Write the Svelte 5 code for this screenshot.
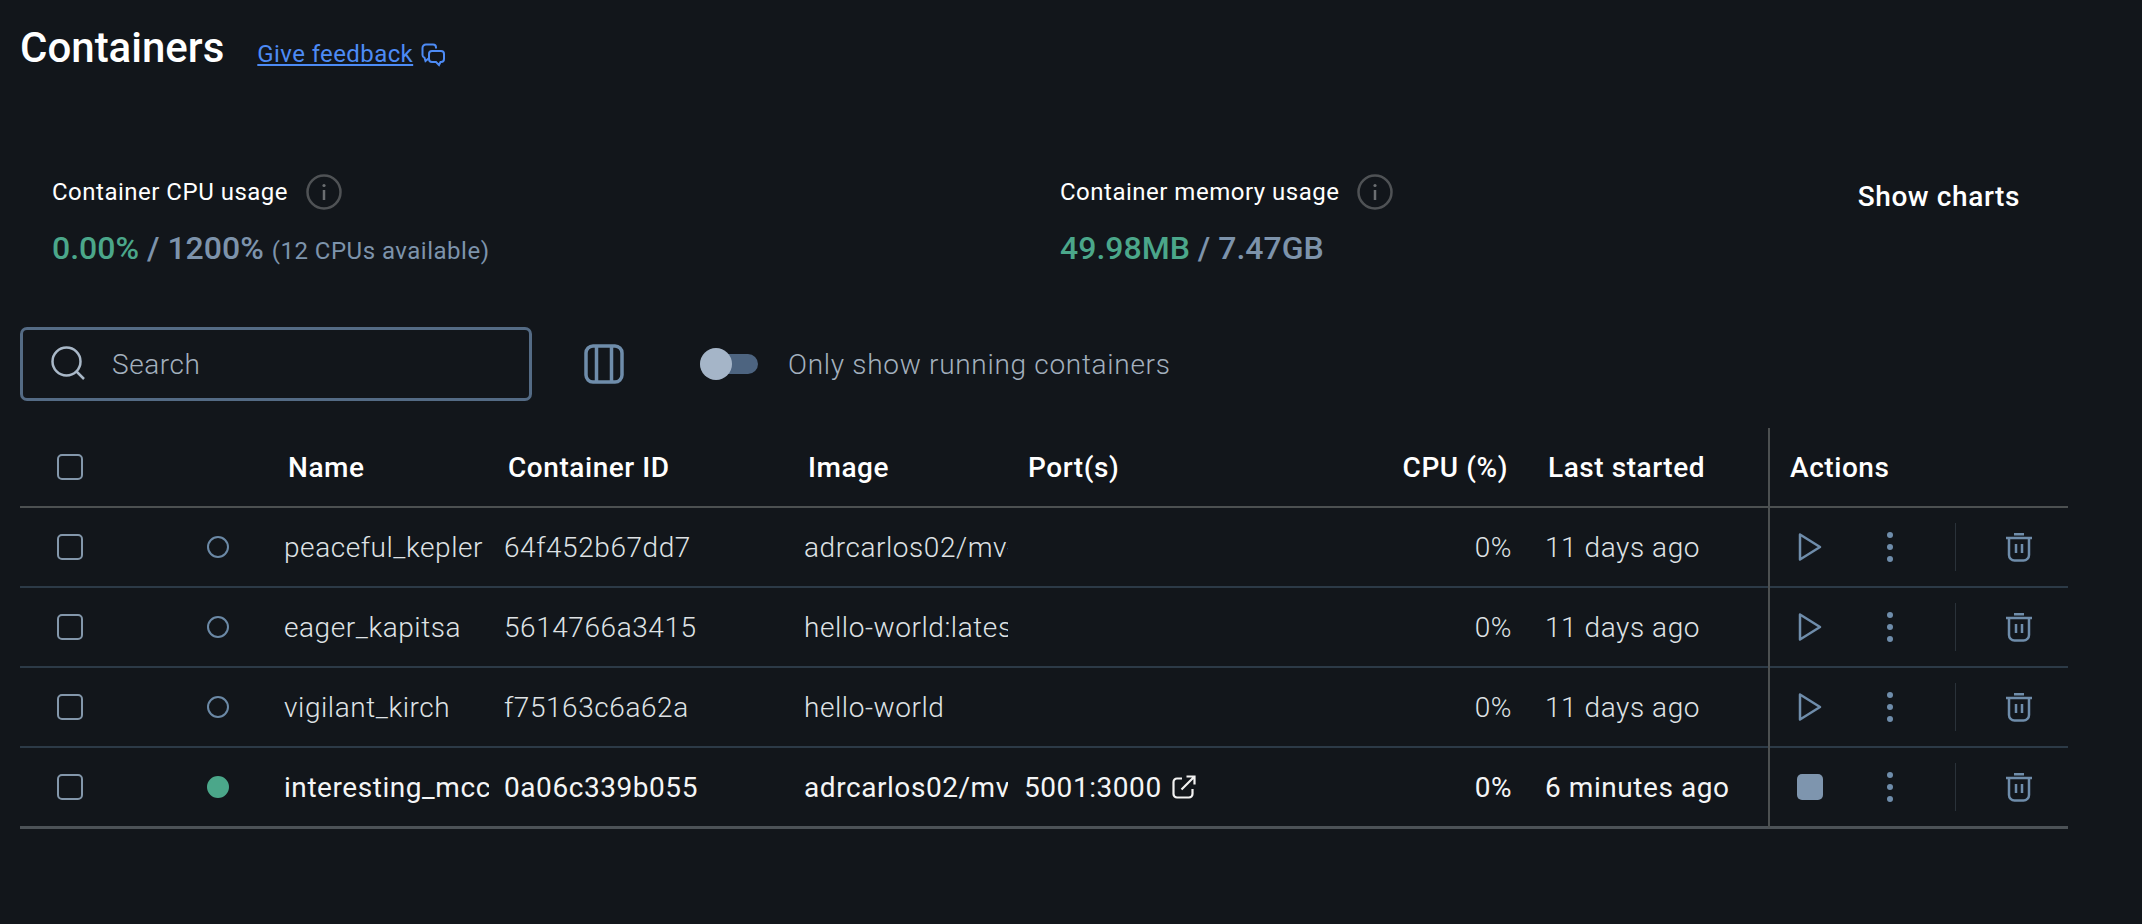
<script lang="ts">
  const rows = [
    { name: 'peaceful_kepler', id: '64f452b67dd7', image: 'adrcarlos02/mv-nodeapp:latest', port: '', cpu: '0%', started: '11 days ago', running: false },
    { name: 'eager_kapitsa', id: '5614766a3415', image: 'hello-world:latest', port: '', cpu: '0%', started: '11 days ago', running: false },
    { name: 'vigilant_kirch', id: 'f75163c6a62a', image: 'hello-world', port: '', cpu: '0%', started: '11 days ago', running: false },
    { name: 'interesting_mccarthy', id: '0a06c339b055', image: 'adrcarlos02/mv-nodeapp:latest', port: '5001:3000', cpu: '0%', started: '6 minutes ago', running: true }
  ];
</script>

{#snippet checkbox()}
  <span class="checkbox"></span>
{/snippet}

{#snippet info()}
  <svg class="info" width="36" height="36" viewBox="0 0 36 36" fill="none">
    <circle cx="18" cy="18" r="16.5" stroke="#4f5255" stroke-width="2.5" />
    <circle cx="18" cy="11.5" r="1.6" fill="#6b6e71" />
    <path d="M18 16v10" stroke="#6b6e71" stroke-width="2.5" />
  </svg>
{/snippet}

<main class="page">
  <header class="title">
    <h1>Containers</h1>
    <a href="#feedback">Give feedback</a>
    <svg width="24" height="24" viewBox="0 0 24 24" fill="none" stroke="#4d8bf5" stroke-width="2">
      <path d="M15 5.5V4.5a3 3 0 0 0-3-3H5a3.500 3.500 0 0 0-3.500 3.500v7a3 3 0 0 0 2 2.800l1 3.200 3-2.500" />
      <path d="M11 8h9a3 3 0 0 1 3 3v5a3 3 0 0 1-3 3h-.5l-1.500 3-3-3h-4a3 3 0 0 1-3-3v-5a3 3 0 0 1 3-3z" />
    </svg>
  </header>

  <section class="stats">
    <div class="stat cpu">
      <div class="stat-label">Container CPU usage {@render info()}</div>
      <div class="stat-value"><b>0.00%</b> / 1200% <small>(12 CPUs available)</small></div>
    </div>
    <div class="stat memory">
      <div class="stat-label">Container memory usage {@render info()}</div>
      <div class="stat-value"><b>49.98MB</b> / 7.47GB</div>
    </div>
    <button class="charts">Show charts</button>
  </section>

  <section class="toolbar">
    <label class="search">
      <svg width="36" height="36" viewBox="0 0 36 36" fill="none" stroke="#a9b8c8" stroke-width="2.500">
        <circle cx="15.5" cy="15.500" r="14" />
        <path d="M25.500 25.500L33 33" />
      </svg>
      <span>Search</span>
    </label>
    <svg class="columns" width="40" height="40" viewBox="0 0 40 40" fill="none" stroke="#6f8dab" stroke-width="3.500">
      <rect x="2" y="2" width="36" height="36" rx="7" />
      <path d="M12.500 2v36M27.500 2v36" />
    </svg>
    <div class="toggle"><span class="knob"></span></div>
    <span class="toggle-label">Only show running containers</span>
  </section>

  <section class="table">
    <div class="row head">
      <div class="cell check">{@render checkbox()}</div>
      <div class="cell"></div>
      <div class="cell name">Name</div>
      <div class="cell id">Container ID</div>
      <div class="cell image">Image</div>
      <div class="cell port">Port(s)</div>
      <div class="cell cpu">CPU (%)</div>
      <div class="cell started">Last started</div>
      <div class="cell actions">Actions</div>
    </div>
    {#each rows as row}
      <div class="row" class:running={row.running}>
        <div class="cell check">{@render checkbox()}</div>
        <div class="cell status"><span class="dot"></span></div>
        <div class="cell name">{row.name}</div>
        <div class="cell id">{row.id}</div>
        <div class="cell image">{row.image}</div>
        <div class="cell port">
          {#if row.port}
            {row.port}
            <svg width="24" height="24" viewBox="0 0 24 24" fill="none" stroke="#f2f2f2" stroke-width="2.200">
              <path d="M10 3.500H5a3.500 3.500 0 0 0-3.500 3.500v12A3.500 3.500 0 0 0 5 22.500h12a3.500 3.500 0 0 0 3.500-3.500v-5" />
              <path d="M9.500 14.500L22 2M14.500 1.500H22.500V9.500" />
            </svg>
          {/if}
        </div>
        <div class="cell cpu">{row.cpu}</div>
        <div class="cell started">{row.started}</div>
        <div class="cell actions">
          <span class="act-main">
            {#if row.running}
              <span class="stop"></span>
            {:else}
              <svg width="24" height="30" viewBox="0 0 24 30" fill="none" stroke="#6f8dab" stroke-width="2.500" stroke-linejoin="round">
                <path d="M2 2.500L22 15 2 27.500z" />
              </svg>
            {/if}
          </span>
          <span class="kebab"><i></i><i></i><i></i></span>
          <span class="sep"></span>
          <svg class="trash" width="28" height="30" viewBox="0 0 28 30" fill="none" stroke="#6f8dab" stroke-width="2.500">
            <path d="M1 6h26M9 2.200h10" />
            <path d="M4 6v17a5.500 5.500 0 0 0 5.500 5.500h9A5.500 5.500 0 0 0 24 23V6" />
            <path d="M11 12v9M17 12v9" />
          </svg>
        </div>
      </div>
    {/each}
  </section>
</main>

<style>
  :global(body) {
    margin: 0;
    background: #12161b;
  }
  .page {
    height: 924px;
    padding: 0 74px 0 20px;
    box-sizing: border-box;
    color: #fff;
    font-family: Roboto, 'Noto Sans', sans-serif;
    overflow: hidden;
  }
  .title {
    display: flex;
    align-items: baseline;
    height: 90px;
    padding-top: 21px;
    box-sizing: border-box;
  }
  h1 {
    margin: 0 33px 0 0;
    font-size: 42px;
    font-weight: 500;
    line-height: 54px;
  }
  .title a {
    color: #4d8bf5;
    font-size: 24px;
    letter-spacing: 0.4px;
    margin-right: 8px;
  }
  .title svg {
    transform: translateY(5px);
  }
  .stats {
    display: flex;
    padding: 82px 48px 0 32px;
    height: 237px;
    box-sizing: border-box;
  }
  .stat.cpu {
    width: 1000px;
  }
  .stat-label {
    display: flex;
    align-items: center;
    gap: 18px;
    font-size: 24px;
    height: 40px;
    letter-spacing: 0.5px;
  }
  .stat-value {
    margin-top: 16px;
    font-size: 32px;
    line-height: 40px;
    font-weight: 500;
    color: #7d93ab;
  }
  .stat-value b {
    font-weight: 500;
    color: #4ba78a;
  }
  .stat-value small {
    font-size: 24px;
    font-weight: 400;
    letter-spacing: 0.5px;
  }
  .charts {
    margin-left: auto;
    height: 48px;
    padding: 0;
    border: 0;
    background: none;
    color: #fff;
    font: 500 28px Roboto, sans-serif;
    letter-spacing: 0.6px;
  }
  .toolbar {
    display: flex;
    align-items: center;
    height: 74px;
  }
  .search {
    display: flex;
    align-items: center;
    gap: 25px;
    width: 512px;
    height: 74px;
    padding-left: 28px;
    box-sizing: border-box;
    border: 3px solid #546b85;
    border-radius: 7px;
    font-size: 28px;
    font-weight: 300;
    letter-spacing: 0.56px;
    color: #a3b0be;
  }
  .columns {
    margin-left: 52px;
  }
  .toggle {
    position: relative;
    width: 58px;
    height: 20px;
    margin-left: 76px;
    border-radius: 10px;
    background: #4d6480;
  }
  .knob {
    position: absolute;
    left: 0;
    top: -6px;
    width: 32px;
    height: 32px;
    border-radius: 50%;
    background: #a5b5c8;
  }
  .toggle-label {
    margin-left: 30px;
    font-size: 28px;
    font-weight: 300;
    letter-spacing: 0.7px;
    color: #a3b0be;
  }
  .table {
    width: 2048px;
    margin-top: 27px;
    border-bottom: 1px solid #4c5257;
  }
  .row {
    display: grid;
    grid-template-columns: 150px 94px 225px 300px 219px 382px 130px 248px 300px;
    grid-template-rows: 78px;
    height: 80px;
    box-sizing: border-box;
    border-bottom: 2px solid #2c3a47;
    font-size: 28px;
    font-weight: 300;
    letter-spacing: 0.56px;
    color: #dfe2e5;
  }
  .row:last-child {
    border-bottom-color: #4c5257;
  }
  .row.running {
    font-weight: 400;
    color: #f4f5f6;
  }
  .head {
    border-bottom-color: #4c5051;
    font-weight: 500;
    color: #fff;
  }
  .cell {
    display: flex;
    align-items: center;
    min-width: 0;
    overflow: hidden;
    white-space: nowrap;
  }
  .check {
    padding-left: 37px;
  }
  .checkbox {
    display: block;
    width: 26px;
    height: 26px;
    box-sizing: border-box;
    border: 2px solid #8397ab;
    border-radius: 5px;
  }
  .status {
    justify-content: center;
    padding-left: 1px;
  }
  .dot {
    width: 22px;
    height: 22px;
    box-sizing: border-box;
    border: 2px solid #6b89a6;
    border-radius: 50%;
  }
  .running .dot {
    background: #4ba78a;
    border-color: #4ba78a;
  }
  .name { padding-left: 20px; }
  .id { padding-left: 15px; }
  .image { padding-left: 15px; }
  .port { padding-left: 16px; gap: 10px; }
  .cpu { justify-content: flex-end; padding-right: 8px; }
  .started { padding-left: 25px; }
  .head .id, .head .image { padding-left: 19px; }
  .head .name { padding-left: 24px; }
  .head .port { padding-left: 20px; }
  .head .started { padding-left: 28px; }
  .head .cpu { padding-right: 12px; }
  /* taller than its row so the divider runs through the row borders */
  .actions {
    box-sizing: border-box;
    height: 80px;
    padding: 0 0 2px 20px;
    border-left: 2px solid #4c5051;
  }
  .act-main {
    display: flex;
    justify-content: center;
    width: 40px;
  }
  .stop {
    width: 26px;
    height: 26px;
    border-radius: 5px;
    background: #7e95ae;
  }
  .kebab {
    display: flex;
    flex-direction: column;
    gap: 6px;
    margin-left: 57px;
  }
  .kebab i {
    display: block;
    width: 6px;
    height: 6px;
    border-radius: 50%;
    background: #6f8dab;
  }
  .sep {
    width: 1px;
    height: 48px;
    margin-left: 62px;
    background: #2a323a;
  }
  .trash {
    margin-left: 49px;
  }
</style>
